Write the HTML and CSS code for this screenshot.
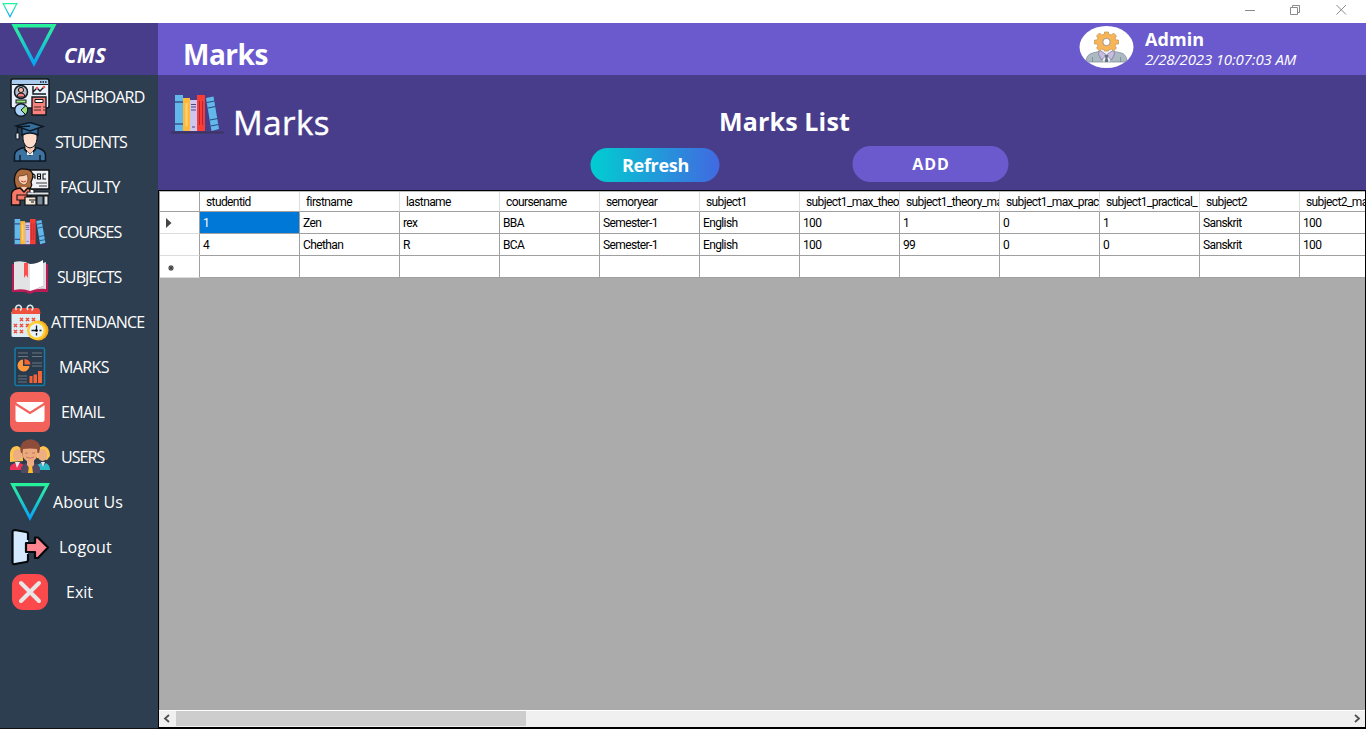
FILE: index.html
```html
<!DOCTYPE html>
<html lang="en">
<head>
<meta charset="utf-8">
<title>CMS - Marks</title>
<link rel="stylesheet" href="styles.css">
</head>
<body>
<svg class="defs" aria-hidden="true">
  <defs>
    <linearGradient id="brand" x1="0" y1="0" x2="0" y2="1"><stop offset="0" stop-color="#25f49a"/><stop offset=".18" stop-color="#28e8a6"/><stop offset="1" stop-color="#049cff"/></linearGradient>
    <symbol id="logo" viewBox="0 0 44 42"><path fill="url(#brand)" fill-rule="evenodd" d="M0 0H44L22 42ZM5.500 3.500L22 34.800L38.500 3.500Z"/></symbol>
    <symbol id="books" viewBox="0 0 54 40">
      <path d="M2 37.500H53" stroke="#3c3460" stroke-width="2.200" stroke-linecap="round"/>
      <path fill="#62b8eb" d="M5 0H13V36H5Z"/><path d="M5 7H13M5 29H13" stroke="#37548e" stroke-width="1.700"/>
      <path fill="#fdb93c" d="M13 3H20V36H13Z"/><path d="M16.500 8V31" stroke="#ffd177" stroke-width="2"/>
      <path fill="#cfc6ee" d="M20 5H27V36H20Z"/><path d="M21 9.500H26M21 12H26M21 15H26M22 32H25" stroke="#51477e"/>
      <path fill="#f83e34" d="M27 0H35V36H27Z"/><path d="M29.500 6V30M32.500 6V30" stroke="#ae2642"/>
      <path fill="#62b8eb" d="M36 3L43.500 1.500L49 34L41.500 36Z"/><path d="M37 7.500L44.500 6M38 13L45.500 11.500M40 25L48 23.500M41 31L48.500 29.500" stroke="#294e80" stroke-width="1.200"/>
    </symbol>
  </defs>
</svg>

<header class="titlebar">
  <svg class="titlebar-logo"><use href="#logo"/></svg>
  <svg class="window-controls" viewBox="0 0 112 16" fill="none" stroke="#8a8a8a" stroke-width="1"><path d="M5 7.500H15"/><path d="M50.500 4.500H57.500V11.500H50.500ZM52.500 4.500V2.500H59.500V9.500H57.500M96.500 2L106 11.500M106 2L96.500 11.500"/></svg>
</header>

<div class="app">
  <aside class="sidebar">
    <div class="brand"><svg class="brand-logo"><use href="#logo"/></svg><span class="brand-name">CMS</span></div>
    <nav class="menu">
      <a class="item dashboard"><svg viewBox="0 0 40 40">
        <rect x="1" y="2" width="38" height="29" rx="2" fill="#e9f2fb" stroke="#111820" stroke-width="1.600"/><path fill="#a9cbed" d="M2 3H38V7H2Z"/><path d="M2 7.500H38" stroke="#111820" stroke-width="1.200"/><path d="M30 5H37" stroke="#111820" stroke-width="1.500" stroke-dasharray="1.500 1"/>
        <circle cx="11" cy="15" r="6.500" fill="#b7bdc7" stroke="#111820" stroke-width="1.500"/><path d="M7 20Q7 16 11 16T15 20Z" fill="#f38383" stroke="#111820"/><circle cx="11" cy="13" r="2.600" fill="#f7b7a4" stroke="#111820"/>
        <path d="M23 9V17H36M23 15L27 11L30 14L34 10" fill="none" stroke="#111820" stroke-width="1.400"/><circle cx="27" cy="11" r="1.300" fill="#f55"/><circle cx="34" cy="10" r="1.300" fill="#f55"/>
        <rect x="6" y="23" width="10" height="3" fill="#9de47c" stroke="#111820"/>
        <path d="M22 20H36V38H22Z" fill="#fa817c" stroke="#111820" stroke-width="1.400"/><path d="M25 22.500H33V25.500H25Z" fill="#fff" stroke="#111820"/><path d="M24 30H31M24 33H31M33 30H35M33 33H35" stroke="#111820" stroke-width=".8"/>
        <circle cx="11" cy="33" r="6.300" fill="#a9d3fb" stroke="#111820" stroke-width="1.400"/><path d="M11 33L16 28.500A6.300 6.300 0 0 1 15.500 37.500Z" fill="#9de47c" stroke="#111820"/>
      </svg><span>DASHBOARD</span></a>
      <a class="item students"><svg viewBox="0 0 40 40">
        <path d="M4.500 39V33Q5 27 15 25.500H25Q35 27 35.500 33V39Z" fill="#3c73a0" stroke="#0c1722" stroke-width="1.500"/><path d="M15 21H25V27L20 32L15 27Z" fill="#f7c9af" stroke="#0c1722"/><path d="M14 27L20 33L26 27M10 33V39M30 33V39" fill="none" stroke="#0c1722" stroke-width="1.400"/><path d="M17 29L20 32L23 29V33H17Z" fill="#eee"/>
        <path d="M13 10H27V17Q26 25 20 26Q14 25 13 17Z" fill="#ffdcca" stroke="#0c1722"/><path d="M12 6H28V13Q20 9 12 13Z" fill="#326b99" stroke="#0c1722" stroke-width="1.400"/><path d="M6 4L20 0.500L33 4.500L20 9Z" fill="#356d9b" stroke="#0c1722" stroke-width="1.500"/><path d="M20 4L7.500 5V14" fill="none" stroke="#0c1722" stroke-width="1.400"/><path d="M6 11H9V17H6Z" fill="#eee" stroke="#0c1722"/>
      </svg><span>STUDENTS</span></a>
      <a class="item faculty"><svg viewBox="0 0 40 40">
        <rect x="20" y="3" width="19" height="19" fill="#eef1f6" stroke="#101010" stroke-width="1.500"/><path d="M22 12V8.500L23.500 7L25 8.500V12M22 10H25M27.500 7V12H30.500V7ZM27.500 9.500H30.500M36 7H33V12H36" fill="none" stroke="#101010" stroke-width="1.100"/><path d="M26 16H37M29 19H37" stroke="#777" stroke-width="1.400"/>
        <path d="M6 20C2 11 6 1 14 2C22 2 25 7 21 15C23 19 20 22 17 23H7Z" fill="#ad6c3d" stroke="#101010" stroke-width="1.300"/>
        <path d="M9 9Q15 9 17 7L18 11Q18 17 14 18Q9 17 8 12Z" fill="#fbd0b2" stroke="#5c3720" stroke-width=".7"/><path d="M11 14Q14 16 16 14" fill="none" stroke="#b43"/>
        <path d="M1.500 38V27Q2 22 10 21L14 25L18 21L21 24V29H10V38Z" fill="#f87868" stroke="#101010" stroke-width="1.300"/><path d="M11 20H17L14 24Z" fill="#fbd0b2"/>
        <path d="M7 28H17V33H7Z" fill="#f87868" stroke="#101010" stroke-width="1.100"/><path d="M17 25H39V28H17Z" fill="#dce4e9" stroke="#101010"/><path d="M15 30H26V38H15Z" fill="#f3e7da" stroke="#101010" stroke-width="1.200"/><path d="M19 33H26M21 35H24M20 25V22L24 23V26" stroke="#101010" fill="#fff"/><path d="M27 29H33V38H27Z" fill="#778899" stroke="#101010"/><path d="M34 29H38V38H34Z" fill="#dce4e9" stroke="#101010"/>
      </svg><span>FACULTY</span></a>
      <a class="item courses"><svg viewBox="0 0 40 40"><use href="#books" x="1" y="7" width="38" height="28"/></svg><span>COURSES</span></a>
      <a class="item subjects"><svg viewBox="0 0 40 40">
        <path fill="#b91b55" d="M2 7H38V35H25L20 37L15 35H2Z"/><path fill="#e2e3e5" d="M4 5Q13 3 20 7V34Q13 31 4 33Z"/><path fill="#fff" d="M20 7Q27 7 33 3V29Q27 32 20 34Z"/><path fill="#dadde2" d="M33 6L36 5V32Q28 31 20 34Q27 32 33 29Z"/><path fill="#f8514f" d="M14 6H18V21L16 18L14 21Z"/>
      </svg><span>SUBJECTS</span></a>
      <a class="item attendance"><svg viewBox="0 0 40 40">
        <path fill="#deedf2" d="M1.500 10H30V34Q30 35 28 35H3Q1 35 1.500 33Z"/><path fill="#f0513c" d="M4 6H28Q30 6 30.500 12H1.500Q2 6 4 6Z"/><path d="M6.500 8A2.800 2.800 0 1 1 10 8.500M18 8A2.800 2.800 0 1 1 21.500 8.500" fill="none" stroke="#d9e8ed" stroke-width="1.600"/>
        <path d="M10 16L13 19M13 16L10 19M16 16L19 19M19 16L16 19M22 16L25 19M25 16L22 19M4 22L7 25M7 22L4 25M10 22L13 25M13 22L10 25M16 22L19 25M19 22L16 25M4 28L7 31M7 28L4 31M10 28L13 31M13 28L10 31" stroke="#ee503e" stroke-width="1.700"/>
        <circle cx="28.500" cy="28.500" r="10" fill="#f7a91c"/><circle cx="26.500" cy="28.500" r="9.500" fill="#ffce32"/><circle cx="26.500" cy="28.500" r="7" fill="#e8f3fa"/><path d="M26.500 23.500V28.500H21.500M29.500 28.500H31.500M26.500 31V33.500" fill="none" stroke="#16202a" stroke-width="1.300"/><circle cx="26.500" cy="28.500" r="1.300"/>
      </svg><span>ATTENDANCE</span></a>
      <a class="item marks"><svg viewBox="0 0 40 40">
        <rect x="5" y="1" width="29.500" height="37.500" rx="1.500" fill="#293a4d" stroke="#1679a3" stroke-width="1.600"/><path d="M8 6H18M22 6H32M8 9.500H18M22 9.500H32M22 16H32M22 19H32M8 29H17M8 32H17M8 35H17" stroke="#6d747c" stroke-width="1.200"/><path fill="#ff973c" d="M13 12.500A6 6 0 1 0 19.500 19H13Z"/><path fill="#f46237" d="M14.500 12A6 6 0 0 1 20.500 17.500H14.500Z"/><path fill="#f46237" d="M19.500 29H22.500V36H19.500ZM23.500 27.500H27V36H23.500ZM28 24H32V36H28Z"/>
      </svg><span>MARKS</span></a>
      <a class="item email"><svg viewBox="0 0 40 40"><rect width="40" height="40" rx="7.500" fill="#f2625b"/><rect x="5.500" y="10" width="29" height="20" rx="2.500" fill="#fff"/><path d="M5 11.500L20 21L35 11.500" fill="none" stroke="#f2625b" stroke-width="2.200"/></svg><span>EMAIL</span></a>
      <a class="item users"><svg viewBox="0 -2 40 40">
        <path fill="#ffc44b" d="M0 23V14Q1 7 7 7Q13 8 13 22Z"/><ellipse cx="7.500" cy="16" rx="4.500" ry="6" fill="#edae84"/><path fill="#ed3157" d="M0 31V28Q1 25 5 24L7 26L10 24L14 26V31Z"/><path fill="#e8e5ec" d="M5 23H10L7 29Z"/>
        <path fill="#ffc44b" d="M27 19Q26 8 33 7Q40 8 40 17L37 21Z"/><ellipse cx="32.500" cy="16" rx="4.500" ry="6" fill="#edae84"/><path fill="#2cb9ca" d="M27 31V26L31 24L33 27L36 24Q40 26 40 31Z"/><path fill="#e8e5ec" d="M31 23H35L33 28Z"/>
        <path fill="#514962" d="M11 34V29Q12 26 17 24H24Q29 26 30 29V34Z"/><path fill="#edae84" d="M17 19H24V26L20 30L17 26Z"/><path fill="#ffbc2c" d="M19 27H22L23 34H18Z"/><path fill="#8d4c39" d="M11 14Q9 7 13 3Q20-2 26 2Q32 5 29 14Z"/><path fill="#edaa80" d="M13 10Q20 9 27 10Q28 14 27 18Q24 23 20 23Q16 23 13 18Q12 14 13 10Z"/><path d="M15 14H18M22 14H25M16 18Q20 20.500 24 18" stroke="#b86b50" stroke-width=".8" fill="none"/>
      </svg><span>USERS</span></a>
      <a class="item about"><svg viewBox="0 0 40 40"><use href="#logo" x="0" y="1" width="40" height="38"/></svg><span>About Us</span></a>
      <a class="item logout"><svg viewBox="0 0 40 40"><path d="M18 13V7Q18 5 16 5L5 3Q2.500 3 2.500 5V35Q2.500 38 5 37L16 35Q18 35 18 33V27" fill="#d4e9ff" stroke="#05080a" stroke-width="2.200"/><path d="M16 16H25V10.500H28L38 20.500L28 31H25V25H16Z" fill="#ff8590" stroke="#05080a" stroke-width="2.200" stroke-linejoin="round"/></svg><span>Logout</span></a>
      <a class="item exit"><svg viewBox="0 0 40 40"><rect x="2" y="2" width="36" height="36" rx="11" fill="#fb494c"/><path d="M11 11L29 29M29 11L11 29" stroke="#e6e6e6" stroke-width="4" stroke-linecap="round"/></svg><span>Exit</span></a>
    </nav>
  </aside>

  <main class="content">
    <section class="topbar">
      <h1>Marks</h1>
      <div class="account">
        <svg class="avatar" viewBox="0 0 54 42"><ellipse cx="27" cy="21" rx="27" ry="21" fill="#fff"/><path fill="#aab9c2" stroke="#7c8893" stroke-width=".7" d="M6.500 34Q8 28 13 27L21 25L27 34L33 25L42 27Q46 28 47.500 34L46 36H9Z"/><path d="M13 31V36M41 31V36" stroke="#7c8893" stroke-width=".8"/><path fill="#edf0f4" d="M22 24H32L30 36H24Z"/><path fill="#c9bddf" stroke="#77729a" stroke-width=".7" d="M20 24L27 29L22 34L19 28ZM34 24L27 29L32 34L35 28Z"/><path fill="#626f80" d="M25 29H29L28 32L29 36H25L26 32Z"/><path fill="#f8b558" stroke="#c18f51" stroke-width=".7" d="M25 6H29V8L32 9L34 7L37 10L35.500 12L36.500 14H39V18H36.500L35.500 20L37 22L34 25L32 23L29 24V25H25V24L22 23L20 25L17 22L18.500 20L17.500 18H15V14H17.500L18.500 12L17 10L20 7L22 9L25 8Z"/><circle cx="27" cy="16" r="3.700" fill="#fff" stroke="#8b8078" stroke-width=".8"/></svg>
        <div class="account-text"><strong>Admin</strong><time>2/28/2023 10:07:03 AM</time></div>
      </div>
    </section>
    <section class="panel">
      <svg class="panel-icon"><use href="#books"/></svg>
      <h2 class="page-name">Marks</h2>
      <button class="refresh">Refresh</button>
      <h2 class="list-title">Marks List</h2>
      <button class="add">ADD</button>
    </section>
    <section class="data-view">
      <div class="table-wrap"><table>
        <thead><tr><th class="row-head"></th><th>studentid</th><th>firstname</th><th>lastname</th><th>coursename</th><th>semoryear</th><th>subject1</th><th>subject1_max_theo</th><th>subject1_theory_ma</th><th>subject1_max_prac</th><th>subject1_practical_</th><th>subject2</th><th>subject2_ma</th></tr></thead>
        <tbody>
        <tr><td class="row-head"><svg viewBox="0 0 6 10"><path fill="#444" d="M0 0L5.500 5L0 10Z"/></svg></td><td class="selected">1</td><td>Zen</td><td>rex</td><td>BBA</td><td>Semester-1</td><td>English</td><td>100</td><td>1</td><td>0</td><td>1</td><td>Sanskrit</td><td>100</td></tr>
        <tr><td class="row-head"></td><td>4</td><td>Chethan</td><td>R</td><td>BCA</td><td>Semester-1</td><td>English</td><td>100</td><td>99</td><td>0</td><td>0</td><td>Sanskrit</td><td>100</td></tr>
        <tr><td class="row-head new-row"><svg viewBox="0 0 6 6"><path d="M3 0V6M0 3H6M1 1L5 5M5 1L1 5" stroke="#444" stroke-width="1.100"/></svg></td><td></td><td></td><td></td><td></td><td></td><td></td><td></td><td></td><td></td><td></td><td></td><td></td></tr>
        </tbody>
      </table></div>
      <div class="scrollbar"><svg viewBox="0 0 17 17"><path d="M10 4L6 7.500L10 11" fill="none" stroke="#505050" stroke-width="1.800"/></svg><div class="track"><div class="thumb"></div></div><svg viewBox="0 0 17 17"><path d="M7 4L11 7.500L7 11" fill="none" stroke="#505050" stroke-width="1.800"/></svg></div>
    </section>
  </main>
</div>
</body>
</html>
```

FILE: styles.css
```css
* { box-sizing: border-box; }
body { margin: 0; width: 1366px; height: 729px; overflow: hidden; color: #fff; font-family: "Open Sans", "Noto Sans", sans-serif; background: #fff; }
svg { display: block; flex: none; }
h1, h2 { margin: 0; }
.defs { position: absolute; width: 0; height: 0; }
.titlebar { height: 23px; display: flex; justify-content: space-between; padding: 3px 14px 0 2px; }
.titlebar-logo { width: 16px; height: 15px; }
.window-controls { width: 112px; height: 16px; }
.app { display: flex; height: 706px; }
.sidebar { width: 158px; height: 705px; background: #2d3e50; box-shadow: 0 1px #111; }
.brand { display: flex; height: 52px; padding-left: 11px; background: #483d8b; }
.brand-logo { width: 46px; height: 43px; margin-top: 1px; }
.brand-name { margin: 18px 0 0 7px; font-size: 20.5px; font-style: italic; font-weight: 700; line-height: 28px; letter-spacing: .2px; }
.item { height: 45px; display: flex; align-items: center; padding: 0 0 2px 10px; font-size: 16px; line-height: 22px; white-space: nowrap; }
.item svg { width: 40px; height: 40px; }
.dashboard span { margin-left: 5px; letter-spacing: -.8px; }
.students span { margin-left: 5px; letter-spacing: -.95px; }
.faculty span { margin-left: 10px; letter-spacing: -.95px; }
.courses span { margin-left: 8px; letter-spacing: -1.05px; }
.subjects span { margin-left: 7px; letter-spacing: -.9px; }
.attendance span { margin-left: 1px; letter-spacing: -.8px; }
.marks span { margin-left: 9px; letter-spacing: -.6px; }
.email span { margin-left: 11px; letter-spacing: -.6px; }
.users span { margin-left: 11px; letter-spacing: -.95px; }
.about span { margin-left: 3px; letter-spacing: .2px; }
.logout span { margin-left: 9px; letter-spacing: .2px; }
.exit span { margin-left: 16px; }
.content { width: 1208px; }
.topbar { height: 52px; display: flex; justify-content: space-between; background: #6a5acd; }
.topbar h1 { margin: 12px 0 0 25px; font-size: 28px; line-height: 38px; letter-spacing: -.5px; }
.account { width: 287px; display: flex; gap: 11px; }
.avatar { width: 55px; height: 42px; margin-top: 3px; }
.account-text { display: flex; flex-direction: column; padding-top: 5px; white-space: nowrap; }
.account-text strong { font-size: 18px; line-height: 23px; letter-spacing: .05px; }
.account-text time { font-size: 15px; line-height: 17px; font-style: italic; letter-spacing: -.15px; }
.panel { height: 115px; display: grid; grid-template-columns: 75px 357px 129px 133px 156px; align-items: start; background: #483d8b; }
.panel-icon { width: 54px; height: 40px; margin: 20px 0 0 12px; grid-row: 1; }
.page-name { grid-column: 2; grid-row: 1; margin-top: 25px; font-size: 33px; line-height: 46px; font-weight: 400; letter-spacing: .5px; -webkit-text-stroke: .4px #fff; }
.list-title { grid-column: 3 / 6; grid-row: 1; margin: 28px 0 0 129px; font-size: 25px; line-height: 36px; letter-spacing: .15px; white-space: nowrap; }
.refresh, .add { grid-row: 1; padding: 0; border: 0; border-radius: 18px; color: #fff; font-family: inherit; font-weight: 700; transform: translateX(.5px); }
.refresh { grid-column: 3; height: 34px; margin-top: 73px; background: linear-gradient(90deg, #00ced1, #4169e1); font-size: 18px; letter-spacing: -.3px; padding-left: 1px; }
.add { grid-column: 5; height: 36px; margin-top: 70.5px; background: #6a5acd; font-size: 16px; letter-spacing: .9px; padding-left: 1px; }
.data-view { height: 539px; display: flex; flex-direction: column; background: #ababab; border: solid #000; border-width: 1px 1px 2px; }
.table-wrap { overflow: hidden; height: 519px; border-top: 1px solid #bbb; border-left: 1px solid #a0a0a0; }
table { border-collapse: separate; border-spacing: 0; table-layout: fixed; width: 1240px; color: #000; font-family: Roboto, "Liberation Sans", sans-serif; font-size: 12px; line-height: 14px; letter-spacing: -.62px; }
th, td { width: 100px; height: 22px; padding: 1px 2px 0 3px; overflow: hidden; white-space: nowrap; text-align: left; font-weight: 400; background: #fff; border-right: 1px solid #a0a0a0; border-bottom: 1px solid #a0a0a0; }
th { height: 20px; padding: 1px 1px 0 6px; border-right-color: #ddd; letter-spacing: -.6px; }
.row-head { width: 40px; padding: 0 0 0 6px; border-bottom-color: #ddd; border-right-color: #a0a0a0; }
th.row-head { border-bottom-color: #a0a0a0; }
.row-head svg { width: 6px; height: 10px; }
.row-head.new-row { padding: 2px 0 0 8px; }
.row-head.new-row svg { width: 6px; height: 6px; }
.selected { color: #fff; background: #0078d7; }
.scrollbar { height: 17px; display: flex; background: #f0f0f0; border-top: 1px solid #fff; }
.scrollbar svg { width: 17px; height: 17px; }
.track { flex: 1; }
.thumb { width: 350px; height: 15px; background: #cdcdcd; }
```
